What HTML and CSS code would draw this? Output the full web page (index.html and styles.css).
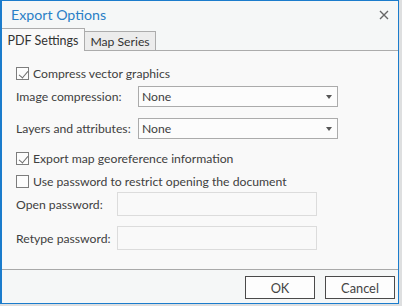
FILE: index.html
```html
<!DOCTYPE html>
<html lang="en">
<head>
    <meta charset="UTF-8">
    <title>Export Options</title>
    <link rel="stylesheet" href="styles.css">
</head>
<body>
    <div class="dialog">
        <div class="titlebar">
            <div class="title">Export Options</div>
            <div class="close">
                <svg width="10" height="10" viewBox="0 0 10 10">
                    <path d="M1 1 L9 9 M9 1 L1 9" stroke="#666" stroke-width="1.4" fill="none"/>
                </svg>
            </div>
        </div>

        <div class="tabs">
            <div class="tab active">PDF Settings</div>
            <div class="tab">Map Series</div>
            <div class="tab-fill"></div>
        </div>

        <div class="content">
            <div class="check-row r-compress">
                <span class="box checked"></span>
                <span>Compress vector graphics</span>
            </div>
            <div class="field-row r-image">
                <span class="label">Image compression:</span>
                <div class="combo"><span>None</span><span class="arrow"></span></div>
            </div>
            <div class="field-row r-layers">
                <span class="label">Layers and attributes:</span>
                <div class="combo"><span>None</span><span class="arrow"></span></div>
            </div>
            <div class="check-row r-geo">
                <span class="box checked"></span>
                <span>Export map georeference information</span>
            </div>
            <div class="check-row r-pass">
                <span class="box"></span>
                <span>Use password to restrict opening the document</span>
            </div>
            <div class="field-row r-open">
                <span class="label short">Open password:</span>
                <div class="textbox"></div>
            </div>
            <div class="field-row r-retype">
                <span class="label short">Retype password:</span>
                <div class="textbox"></div>
            </div>
        </div>

        <div class="footer">
            <div class="btn">OK</div>
            <div class="btn">Cancel</div>
        </div>
    </div>
</body>
</html>
```

FILE: styles.css
```css
* {
    margin: 0;
    padding: 0;
    box-sizing: border-box;
    font-family: 'Lato', 'Noto Sans', Arial, sans-serif;
    white-space: nowrap;
}

body {
    background: #dedfe0;
    width: 402px;
    height: 306px;
    overflow: hidden;
    color: #404040;
    font-size: 12.2px;
}

.dialog {
    width: 399px;
    height: 304px;
    background: #f5f7f7;
    border: 1px solid #1b7ccc;
    border-left-width: 2px;
    display: flex;
    flex-direction: column;
}

.titlebar {
    height: 27px;
    display: flex;
    align-items: center;
    justify-content: space-between;
    padding: 0 9px 0 9px;
}

.title {
    color: #2a7fc6;
    font-size: 14.2px;
}

.close {
    display: flex;
    margin-top: 1px;
}

.tabs {
    height: 23px;
    display: flex;
    align-items: flex-end;
}

.tab {
    width: 71px;
    height: 20px;
    border: 1px solid #acacac;
    border-left: none;
    background: #ececec;
    display: flex;
    align-items: center;
    justify-content: center;
    color: #333;
    font-size: 12.2px;
}

.tab.active {
    height: 23px;
    width: 83px;
    background: #f9f9f9;
    border-bottom: none;
    font-size: 12.5px;
}

.tab-fill {
    flex: 1;
    border-bottom: 1px solid #acacac;
}

.content {
    flex: 1;
    background: #f9f9f9;
    padding: 16px 0 0 14px;
    display: flex;
    flex-direction: column;
}

.check-row {
    display: flex;
    align-items: center;
    gap: 4px;
    height: 13px;
}

.box {
    width: 13px;
    height: 13px;
    border: 1px solid #7d7d7d;
    background: #fdfdfd;
    position: relative;
}

.box.checked::after {
    content: "";
    position: absolute;
    left: 3.5px;
    top: 0.5px;
    width: 4px;
    height: 8px;
    border: solid #6e6e6e;
    border-width: 0 1.5px 1.5px 0;
    transform: rotate(40deg);
}

.field-row {
    display: flex;
    align-items: center;
}

.label {
    width: 122px;
}

.label.short {
    width: 101px;
}

.combo {
    width: 200px;
    height: 21px;
    border: 1px solid #ababab;
    background: #fcfcfc;
    display: flex;
    align-items: center;
    justify-content: space-between;
    padding: 0 5px 0 3px;
}

.arrow {
    width: 0;
    height: 0;
    border-left: 3.5px solid transparent;
    border-right: 3.5px solid transparent;
    border-top: 4px solid #555;
}

.textbox {
    width: 200px;
    height: 24px;
    border: 1px solid #dcdcdc;
    background: #f9f9f9;
}

.r-image { margin-top: 6px; }
.r-layers { margin-top: 11px; }
.r-geo { margin-top: 13px; }
.r-pass { margin-top: 10px; }
.r-open { margin-top: 4px; }
.r-retype { margin-top: 10px; }

.footer {
    height: 34px;
    border-top: 1px solid #a9a9a9;
    display: flex;
    justify-content: flex-end;
    align-items: flex-start;
    gap: 10px;
    padding: 6px 3px 0 0;
}

.btn {
    width: 70px;
    height: 23px;
    border: 1px solid #4a4a4a;
    background: #fdfdfd;
    display: flex;
    align-items: center;
    justify-content: center;
    color: #444;
    font-size: 12.8px;
}
```
